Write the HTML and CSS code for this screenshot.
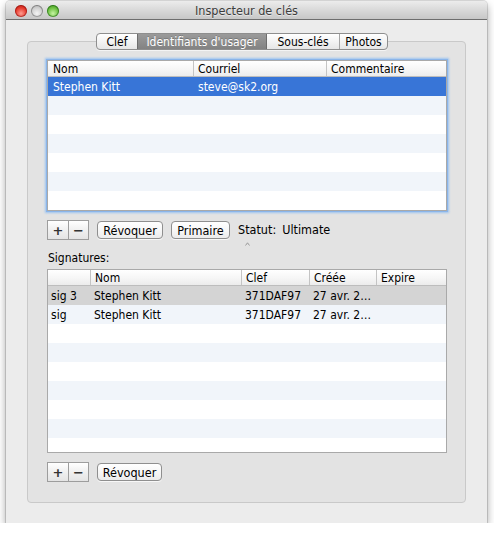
FILE: index.html
```html
<!DOCTYPE html>
<html lang="fr">
<head>
<meta charset="utf-8">
<title>Inspecteur de clés</title>
<link rel="stylesheet" href="styles.css">
</head>
<body>
<div class="window">
  <div class="titlebar">
    <div class="lights">
      <span class="light red"></span>
      <span class="light grey"></span>
      <span class="light green"></span>
    </div>
    <div class="title">Inspecteur de clés</div>
    <div></div>
  </div>
  <div class="content">
    <div class="tabs">
      <span class="tab t-clef">Clef</span>
      <span class="tab t-uid sel">Identifiants d'usager</span>
      <span class="tab t-sub">Sous-clés</span>
      <span class="tab t-photo">Photos</span>
    </div>
    <div class="panel">
      <div class="table uid focus">
        <div class="thead uid-cols">
          <div class="th">Nom</div>
          <div class="th">Courriel</div>
          <div class="th">Commentaire</div>
        </div>
        <div class="tbody uid-body">
          <div class="row uid-cols sel"><div class="td">Stephen Kitt</div><div class="td">steve@sk2.org</div><div class="td"></div></div>
          <div class="row uid-cols alt"></div>
          <div class="row uid-cols"></div>
          <div class="row uid-cols alt"></div>
          <div class="row uid-cols"></div>
          <div class="row uid-cols alt"></div>
          <div class="row uid-cols"></div>
        </div>
      </div>

      <div class="controls">
        <div class="addrem"><span class="seg">+</span><span class="seg">−</span></div>
        <button class="btn b-revoke">Révoquer</button>
        <button class="btn b-primary">Primaire</button>
        <div class="status">
          <span>Statut:</span><span>Ultimate</span>
          <svg class="mark" width="5" height="4" viewBox="0 0 5 4"><path d="M0.5 3.5 L2.5 0.8 L4.5 3.5" fill="none" stroke="#9a9a9a" stroke-width="1"/></svg>
        </div>
      </div>

      <div class="label">Signatures:</div>

      <div class="table sigs">
        <div class="thead sig-cols">
          <div class="th"></div>
          <div class="th">Nom</div>
          <div class="th">Clef</div>
          <div class="th">Créée</div>
          <div class="th">Expire</div>
        </div>
        <div class="tbody sig-body">
          <div class="row sig-cols gsel"><div class="td">sig 3</div><div class="td">Stephen Kitt</div><div class="td">371DAF97</div><div class="td">27 avr. 2…</div><div class="td"></div></div>
          <div class="row sig-cols alt"><div class="td">sig</div><div class="td">Stephen Kitt</div><div class="td">371DAF97</div><div class="td">27 avr. 2…</div><div class="td"></div></div>
          <div class="row sig-cols"></div>
          <div class="row sig-cols alt"></div>
          <div class="row sig-cols"></div>
          <div class="row sig-cols alt"></div>
          <div class="row sig-cols"></div>
          <div class="row sig-cols alt"></div>
          <div class="row sig-cols"></div>
        </div>
      </div>

      <div class="controls bottom">
        <div class="addrem"><span class="seg">+</span><span class="seg">−</span></div>
        <button class="btn b-revoke2">Révoquer</button>
      </div>
    </div>
  </div>
</div>
</body>
</html>
```

FILE: styles.css
```css
* { box-sizing: border-box; }

html, body {
  margin: 0;
  padding: 0;
  background: #ffffff;
}

body {
  font-family: "DejaVu Sans Condensed", "Liberation Sans", sans-serif;
  font-size: 11.5px;
  color: #000;
  padding: 1px 0 0 6px;
}

.window {
  width: 481px;
  height: 522px;
  background: #ececec;
  border-radius: 4px 4px 0 0;
  box-shadow: 0 0 0 1px rgba(0,0,0,0.12), 0 4px 8px rgba(0,0,0,0.38);
  display: flex;
  flex-direction: column;
}

.titlebar {
  height: 19px;
  border-radius: 4px 4px 0 0;
  background: linear-gradient(#ececec, #d9d9d9 50%, #c7c7c7);
  border-bottom: 1px solid #6e6e6e;
  display: grid;
  grid-template-columns: 1fr auto 1fr;
  align-items: center;
}

.lights {
  display: flex;
  gap: 4px;
  padding-left: 9px;
  padding-top: 1px;
}

.light {
  width: 12px;
  height: 12px;
  border-radius: 50%;
  display: block;
}
.light.red {
  background: radial-gradient(circle at 50% 70%, #ff9c90 0, #e5392c 55%, #a3170c 100%);
  box-shadow: inset 0 0 0 1px rgba(120,0,0,0.45);
}
.light.grey {
  background: radial-gradient(circle at 50% 70%, #f4f4f4 0, #cfcfcf 55%, #9d9d9d 100%);
  box-shadow: inset 0 0 0 1px rgba(0,0,0,0.3);
}
.light.green {
  background: radial-gradient(circle at 50% 70%, #c6f5a3 0, #6bbf3f 55%, #2f7d12 100%);
  box-shadow: inset 0 0 0 1px rgba(0,70,0,0.45);
}

.title {
  font-size: 12.5px;
  color: #3c3c3c;
  text-shadow: 0 1px 0 rgba(255,255,255,0.5);
}

.content {
  flex: 1;
  padding: 13px 21px 20px 21px;
  display: flex;
  flex-direction: column;
}

.tabs {
  display: flex;
  align-self: flex-start;
  margin-left: 69px;
  margin-bottom: -9px;
  position: relative;
  z-index: 1;
  height: 17px;
  border: 1px solid #8e8e8e;
  border-radius: 4px;
  background: linear-gradient(#ffffff, #f3f3f3 50%, #e6e6e6);
  box-shadow: 0 1px 0 rgba(255,255,255,0.6);
  overflow: hidden;
}

.tab {
  display: flex;
  align-items: center;
  justify-content: center;
  height: 100%;
  font-size: 12px;
  border-left: 1px solid #a5a5a5;
}
.tab:first-child { border-left: 0; }
.t-clef { width: 40px; }
.t-uid { width: 129px; }
.t-sub { width: 73px; }
.t-photo { width: 48px; }
.tab.sel {
  background: linear-gradient(#9a9a9a, #838383);
  color: #fff;
  border-left-color: #6d6d6d;
  text-shadow: 0 -1px 0 rgba(0,0,0,0.2);
}
.tab.sel + .tab { border-left-color: #6d6d6d; }

.panel {
  flex: 1;
  background: #e3e3e3;
  border: 1px solid #c9c9c9;
  border-radius: 4px;
  padding: 18px 18px 0 19px;
  display: flex;
  flex-direction: column;
}

.table {
  width: 400px;
  border: 1px solid #a9a9a9;
  background: #fff;
  overflow: hidden;
}
.table.focus {
  box-shadow: 0 0 0 1px #8ab5ea, 0 0 2px 2px #9cc3f0;
}

.thead {
  height: 16px;
  background: linear-gradient(#ffffff, #f5f5f5 60%, #ececec);
  border-bottom: 1px solid #bdbdbd;
  align-items: center;
}

.th {
  height: 100%;
  display: flex;
  align-items: center;
  padding-left: 4px;
  border-left: 1px solid #c4c4c4;
  font-size: 12px;
  white-space: nowrap;
}
.th:first-child { border-left: 0; padding-left: 5px; }

.uid-cols {
  display: grid;
  grid-template-columns: 145px 133px 1fr;
}
.sig-cols {
  display: grid;
  grid-template-columns: 42px 151px 68px 67px 1fr;
}

.uid-body { height: 133px; }
.sig-body { height: 166px; }
.tbody { overflow: hidden; }

.row {
  height: 19px;
  align-items: center;
  font-size: 12px;
}
.row.alt { background: #f1f5fa; }
.row.sel { background: #3875d7; color: #fff; }
.row.gsel { background: #d4d4d4; }

.td {
  padding-left: 5px;
  white-space: nowrap;
  overflow: hidden;
}
.sig-cols .td { padding-left: 4px; }
.sig-cols .td:first-child { padding-left: 3px; }

.controls {
  display: flex;
  align-items: center;
  margin-top: 9px;
  height: 20px;
}
.controls.bottom { margin-top: 9px; }

.addrem {
  display: flex;
  height: 20px;
  border: 1px solid #9d9d9d;
  background: linear-gradient(#ffffff, #f0f0f0 50%, #e4e4e4);
  margin-right: 8px;
}
.seg {
  width: 20px;
  display: flex;
  align-items: center;
  justify-content: center;
  font-family: "DejaVu Sans", sans-serif;
  font-weight: bold;
  font-size: 13px;
  color: #333;
  line-height: 1;
}
.seg + .seg { border-left: 1px solid #9d9d9d; }

.btn {
  font-family: inherit;
  font-size: 12.5px;
  height: 18px;
  padding: 0;
  border: 1px solid #8f8f8f;
  border-radius: 4px;
  background: linear-gradient(#ffffff, #f7f7f7 50%, #ebebeb);
  box-shadow: 0 1px 0 rgba(255,255,255,0.7);
  color: #000;
  margin-right: 8px;
}
.b-revoke { width: 66px; }
.b-primary { width: 59px; }
.b-revoke2 { width: 65px; }

.status {
  display: flex;
  gap: 6px;
  font-size: 12.5px;
  padding-bottom: 1px;
  position: relative;
}

.mark {
  position: absolute;
  left: 7px;
  top: 20px;
}

.label {
  margin-top: 12px;
  margin-bottom: 4px;
  font-size: 12px;
  padding-left: 1px;
  line-height: 13px;
}
```
